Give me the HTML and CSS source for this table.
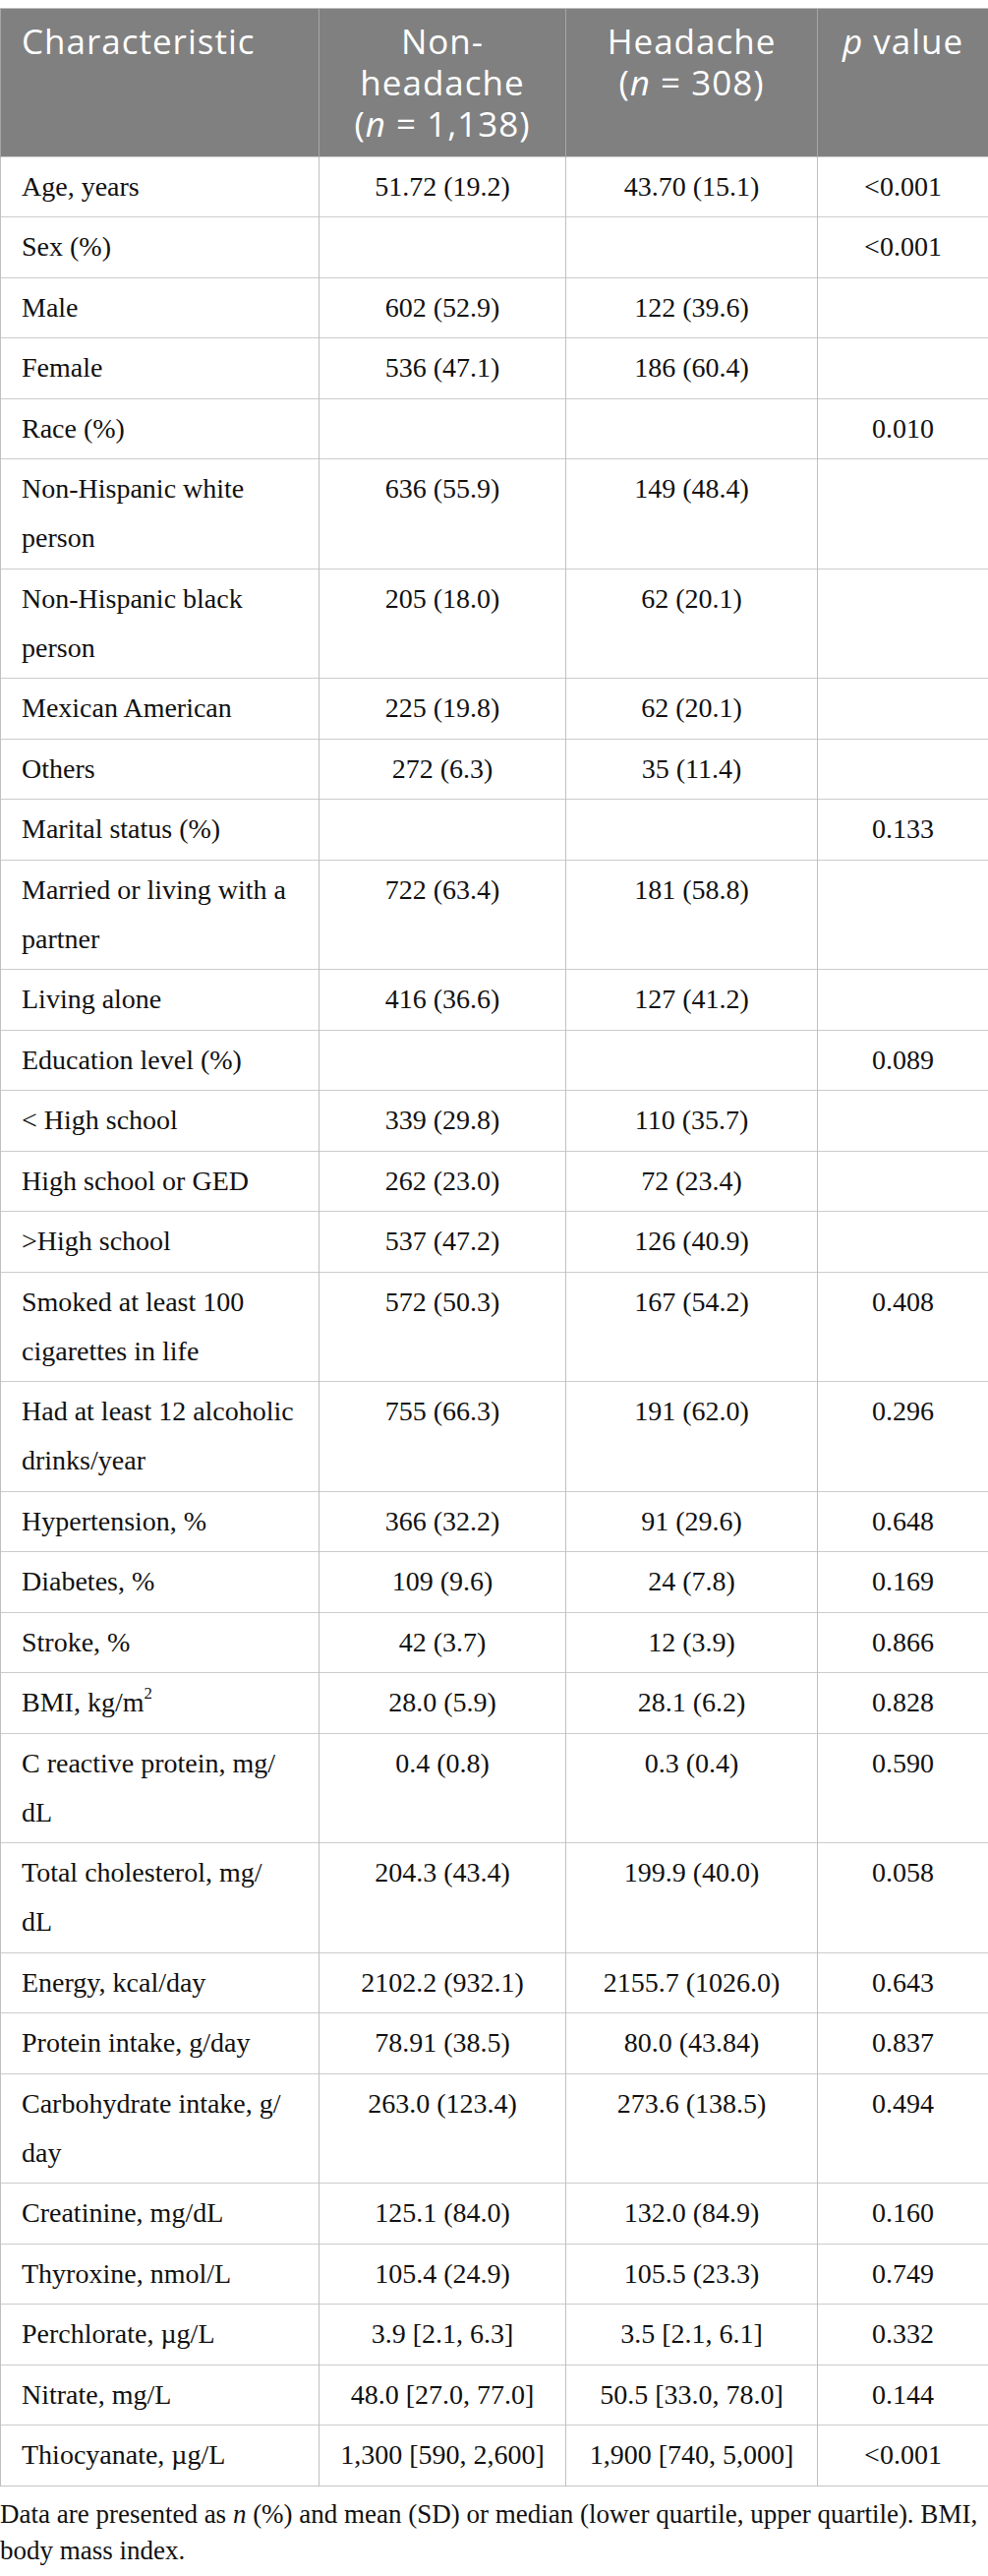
FILE: index.html
```html
<!DOCTYPE html>
<html lang="en">
<head>
    <meta charset="UTF-8">
    <title>Table 1 - Baseline characteristics</title>
    <link rel="stylesheet" href="styles.css">
</head>
<body>
    <div class="table-wrap">
        <table class="data-table">
            <colgroup>
                <col class="col-label">
                <col class="col-group">
                <col class="col-group2">
                <col class="col-p">
            </colgroup>
            <thead>
                <tr>
                    <th class="left">Characteristic</th>
                    <th>Non-<br>headache<br>(<i>n</i> = 1,138)</th>
                    <th>Headache<br>(<i>n</i> = 308)</th>
                    <th><i>p</i> value</th>
                </tr>
            </thead>
            <tbody>
                <tr><td>Age, years</td><td>51.72 (19.2)</td><td>43.70 (15.1)</td><td>&lt;0.001</td></tr>
                <tr><td>Sex (%)</td><td></td><td></td><td>&lt;0.001</td></tr>
                <tr><td>Male</td><td>602 (52.9)</td><td>122 (39.6)</td><td></td></tr>
                <tr><td>Female</td><td>536 (47.1)</td><td>186 (60.4)</td><td></td></tr>
                <tr><td>Race (%)</td><td></td><td></td><td>0.010</td></tr>
                <tr><td>Non-Hispanic white<br>person</td><td>636 (55.9)</td><td>149 (48.4)</td><td></td></tr>
                <tr><td>Non-Hispanic black<br>person</td><td>205 (18.0)</td><td>62 (20.1)</td><td></td></tr>
                <tr><td>Mexican American</td><td>225 (19.8)</td><td>62 (20.1)</td><td></td></tr>
                <tr><td>Others</td><td>272 (6.3)</td><td>35 (11.4)</td><td></td></tr>
                <tr><td>Marital status (%)</td><td></td><td></td><td>0.133</td></tr>
                <tr><td>Married or living with a<br>partner</td><td>722 (63.4)</td><td>181 (58.8)</td><td></td></tr>
                <tr><td>Living alone</td><td>416 (36.6)</td><td>127 (41.2)</td><td></td></tr>
                <tr><td>Education level (%)</td><td></td><td></td><td>0.089</td></tr>
                <tr><td>&lt; High school</td><td>339 (29.8)</td><td>110 (35.7)</td><td></td></tr>
                <tr><td>High school or GED</td><td>262 (23.0)</td><td>72 (23.4)</td><td></td></tr>
                <tr><td>&gt;High school</td><td>537 (47.2)</td><td>126 (40.9)</td><td></td></tr>
                <tr><td>Smoked at least 100<br>cigarettes in life</td><td>572 (50.3)</td><td>167 (54.2)</td><td>0.408</td></tr>
                <tr><td>Had at least 12 alcoholic<br>drinks/year</td><td>755 (66.3)</td><td>191 (62.0)</td><td>0.296</td></tr>
                <tr><td>Hypertension, %</td><td>366 (32.2)</td><td>91 (29.6)</td><td>0.648</td></tr>
                <tr><td>Diabetes, %</td><td>109 (9.6)</td><td>24 (7.8)</td><td>0.169</td></tr>
                <tr><td>Stroke, %</td><td>42 (3.7)</td><td>12 (3.9)</td><td>0.866</td></tr>
                <tr><td>BMI, kg/m<sup>2</sup></td><td>28.0 (5.9)</td><td>28.1 (6.2)</td><td>0.828</td></tr>
                <tr><td>C reactive protein, mg/<br>dL</td><td>0.4 (0.8)</td><td>0.3 (0.4)</td><td>0.590</td></tr>
                <tr><td>Total cholesterol, mg/<br>dL</td><td>204.3 (43.4)</td><td>199.9 (40.0)</td><td>0.058</td></tr>
                <tr><td>Energy, kcal/day</td><td>2102.2 (932.1)</td><td>2155.7 (1026.0)</td><td>0.643</td></tr>
                <tr><td>Protein intake, g/day</td><td>78.91 (38.5)</td><td>80.0 (43.84)</td><td>0.837</td></tr>
                <tr><td>Carbohydrate intake, g/<br>day</td><td>263.0 (123.4)</td><td>273.6 (138.5)</td><td>0.494</td></tr>
                <tr><td>Creatinine, mg/dL</td><td>125.1 (84.0)</td><td>132.0 (84.9)</td><td>0.160</td></tr>
                <tr><td>Thyroxine, nmol/L</td><td>105.4 (24.9)</td><td>105.5 (23.3)</td><td>0.749</td></tr>
                <tr><td>Perchlorate, µg/L</td><td>3.9 [2.1, 6.3]</td><td>3.5 [2.1, 6.1]</td><td>0.332</td></tr>
                <tr><td>Nitrate, mg/L</td><td>48.0 [27.0, 77.0]</td><td>50.5 [33.0, 78.0]</td><td>0.144</td></tr>
                <tr><td>Thiocyanate, µg/L</td><td>1,300 [590, 2,600]</td><td>1,900 [740, 5,000]</td><td>&lt;0.001</td></tr>
            </tbody>
        </table>
        <p class="table-note">Data are presented as <i>n</i> (%) and mean (SD) or median (lower quartile, upper quartile). BMI, body mass index.</p>
    </div>
</body>
</html>
```

FILE: styles.css
```css
body {
    margin: 0;
    padding: 0;
    background: #ffffff;
    color: #111111;
    font-family: "Liberation Serif", "Times New Roman", serif;
}
.table-wrap {
    padding-top: 8px;
    width: 1005px;
}
.data-table {
    width: 1005px;
    border-collapse: collapse;
    table-layout: fixed;
    border: 1px solid #c4c4c4;
}
.col-label { width: 324px; }
.col-group { width: 251px; }
.col-group2 { width: 256px; }
.col-p { width: 174px; }

.data-table th {
    background: #808080;
    color: #ffffff;
    font-family: "Open Sans", "Liberation Sans", sans-serif;
    font-weight: 400;
    font-size: 35px;
    line-height: 42px;
    letter-spacing: 1px;
    padding: 12px 8px;
    text-align: center;
    vertical-align: top;
    border-left: 1px solid #a6a6a6;
    border-top: 1px solid #bdbdbd;
}
.data-table th.left {
    text-align: left;
    padding-left: 21px;
}
.data-table td {
    font-size: 28px;
    line-height: 50px;
    padding: 5px 6px;
    text-align: center;
    vertical-align: top;
    border-top: 1px solid #cccccc;
    border-left: 1px solid #c0c0c0;
}
/* rows in the source alternate 61/62px tall */
.data-table tbody tr:nth-child(even) td {
    padding-bottom: 6px;
}
.data-table td:first-child {
    text-align: left;
    padding-left: 21px;
    padding-right: 4px;
}
.data-table sup {
    font-size: 0.6em;
    line-height: 0;
    vertical-align: 0.75em;
}
.table-note {
    margin: 10px 0 0 0;
    font-size: 27px;
    line-height: 37px;
}
```
